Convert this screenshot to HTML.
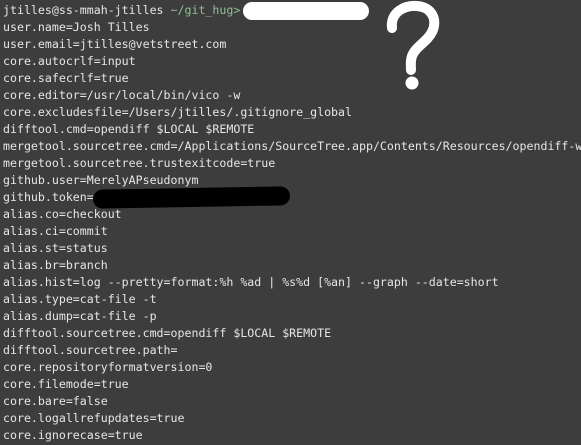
<!DOCTYPE html>
<html><head><meta charset="utf-8"><style>
html,body{margin:0;padding:0;}
body{width:581px;height:445px;background:#3d3d3d;overflow:hidden;position:relative;}
pre{position:absolute;left:3px;top:2px;margin:0;font-family:"DejaVu Sans Mono","Liberation Mono",monospace;font-size:11.6px;line-height:17px;color:#e6e6e6;white-space:pre;}
.g{color:#8fbf95;}
.blob{position:absolute;background:#fff;border-radius:9px;}
.blk{position:absolute;background:#000;border-radius:10px;}
</style></head><body>
<pre>jtilles@ss-mmah-jtilles <span class="g">~/git_hug&gt;</span>
user.name=Josh Tilles
user.email=jtilles@vetstreet.com
core.autocrlf=input
core.safecrlf=true
core.editor=/usr/local/bin/vico -w
core.excludesfile=/Users/jtilles/.gitignore_global
difftool.cmd=opendiff $LOCAL $REMOTE
mergetool.sourcetree.cmd=/Applications/SourceTree.app/Contents/Resources/opendiff-w
mergetool.sourcetree.trustexitcode=true
github.user=MerelyAPseudonym
github.token=
alias.co=checkout
alias.ci=commit
alias.st=status
alias.br=branch
alias.hist=log --pretty=format:%h %ad | %s%d [%an] --graph --date=short
alias.type=cat-file -t
alias.dump=cat-file -p
difftool.sourcetree.cmd=opendiff $LOCAL $REMOTE
difftool.sourcetree.path=
core.repositoryformatversion=0
core.filemode=true
core.bare=false
core.logallrefupdates=true
core.ignorecase=true</pre>
<div class="blob" style="left:243px;top:2px;width:126px;height:18px;"></div>
<div class="blk" style="left:93px;top:188px;width:197px;height:19px;transform:rotate(-1deg);"></div>
<svg style="position:absolute;left:380px;top:0" width="70" height="95" viewBox="0 0 70 95">
<path d="M12 28 C10 12 25 5 37 6 C52 7 58 20 52 32 C47 42 36 46 32 56 C30 62 31 66 31 70" stroke="#fff" stroke-width="10" fill="none" stroke-linecap="round"/>
<circle cx="32" cy="83" r="6.5" fill="#fff"/>
</svg>
</body></html>
